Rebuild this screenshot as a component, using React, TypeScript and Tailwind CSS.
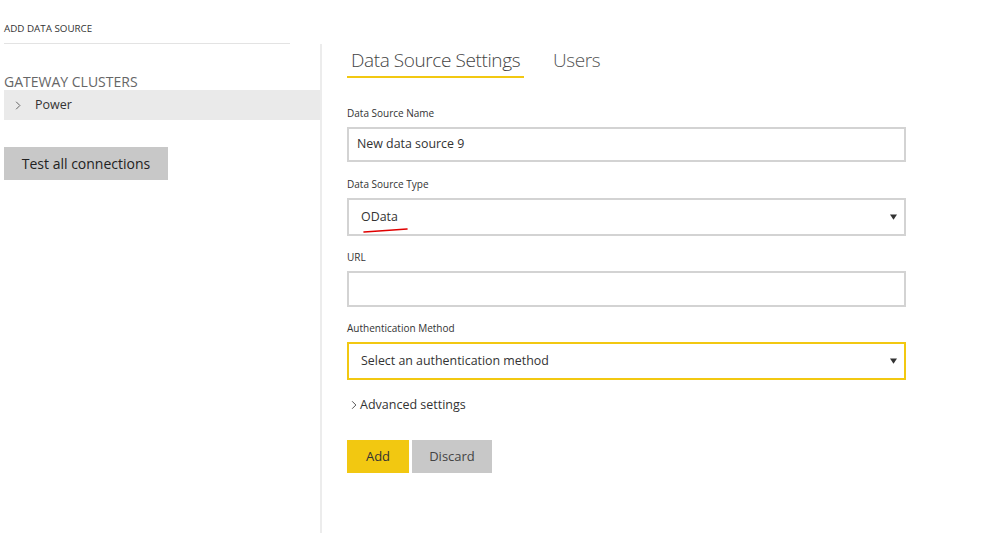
import React from 'react';

const font = { fontFamily: '"Segoe UI", "Open Sans", "Liberation Sans", sans-serif' };

function Chevron({ className }: { className?: string }) {
  return (
    <svg viewBox="0 0 8 12" className={className} fill="none" stroke="currentColor" strokeWidth="1.2">
      <path d="M1.5 1 L6.5 6 L1.5 11" />
    </svg>
  );
}

function Caret() {
  return (
    <svg viewBox="0 0 8 6" className="w-[7px] h-[6px] text-[#333]" fill="currentColor">
      <path d="M0 0 H8 L4 6 Z" />
    </svg>
  );
}

function Label({ children, className = '' }: { children: React.ReactNode; className?: string }) {
  return <div className={`text-[10px] leading-[14px] text-[#333] ${className}`}>{children}</div>;
}

export default function App() {
  return (
    <div className="w-[999px] h-[533px] bg-white flex overflow-hidden" style={font}>
      {/* Left panel */}
      <div className="w-[320px] flex flex-col">
        <div className="ml-[4px] w-[286px] h-[44px] border-b border-[#e3e3e3] pt-[23px]">
          <div className="text-[9.8px] leading-[12px] text-[#333] uppercase">Add data source</div>
        </div>
        <div className="ml-[4px] mt-[29px] text-[14px] leading-[17px] text-[#666] uppercase">Gateway clusters</div>
        <div className="ml-[4px] h-[30px] bg-[#eaeaea] flex items-center">
          <Chevron className="ml-[11px] w-[6px] h-[11px] text-[#555]" />
          <span className="ml-[14px] text-[12.5px] text-[#333]">Power</span>
        </div>
        <button className="ml-[4px] mt-[27px] w-[164px] h-[33px] bg-[#c8c8c8] text-[14px] text-[#222]">
          Test all connections
        </button>
      </div>

      {/* Right panel */}
      <div className="mt-[44px] border-l-2 border-[#ececec] pl-[25px] flex-1">
        <div className="flex gap-[29px]">
          <div className="px-[4px] pt-[4px] pb-[4px] border-b-2 border-[#f2c811] text-[19px] leading-[24px] tracking-[-0.4px] text-[#444] font-light">
            Data Source Settings
          </div>
          <div className="pt-[4px] text-[19px] leading-[24px] tracking-[-0.4px] text-[#555] font-light">Users</div>
        </div>

        <div className="w-[559px]">
          <Label className="mt-[28px]">Data Source Name</Label>
          <div className="mt-[7px] h-[35px] border-2 border-[#d3d3d3] flex items-center px-[8px] text-[12.4px] text-[#333]">
            New data source 9
          </div>

          <Label className="mt-[15px]">Data Source Type</Label>
          <div className="relative mt-[7px] h-[38px] border-2 border-[#d3d3d3] flex items-center justify-between pl-[12px] pr-[7px] text-[12.4px] text-[#333]">
            <span>OData</span>
            <Caret />
            <svg className="absolute left-[14px] top-[26px] w-[46px] h-[8px]" viewBox="0 0 46 8" fill="none">
              <path d="M1 6 C 14 5, 30 4, 44 3" stroke="#e00000" strokeWidth="1.6" strokeLinecap="round" />
            </svg>
          </div>

          <Label className="mt-[14px]">URL</Label>
          <div className="mt-[7px] h-[36px] border-2 border-[#d3d3d3]" />

          <Label className="mt-[14px]">Authentication Method</Label>
          <div className="mt-[7px] h-[38px] border-2 border-[#f2c811] flex items-center justify-between pl-[12px] pr-[7px] text-[12.4px] text-[#333]">
            <span>Select an authentication method</span>
            <Caret />
          </div>

          <div className="mt-[16px] flex items-center text-[12.5px] leading-[18px] text-[#333]">
            <Chevron className="ml-[4px] w-[6px] h-[10px] text-[#444]" />
            <span className="ml-[3px]">Advanced settings</span>
          </div>

          <div className="mt-[26px] flex gap-[3px]">
            <button className="w-[62px] h-[33px] bg-[#f2c811] text-[13px] text-[#333]">Add</button>
            <button className="w-[80px] h-[33px] bg-[#c8c8c8] text-[13px] text-[#444]">Discard</button>
          </div>
        </div>
      </div>
    </div>
  );
}
